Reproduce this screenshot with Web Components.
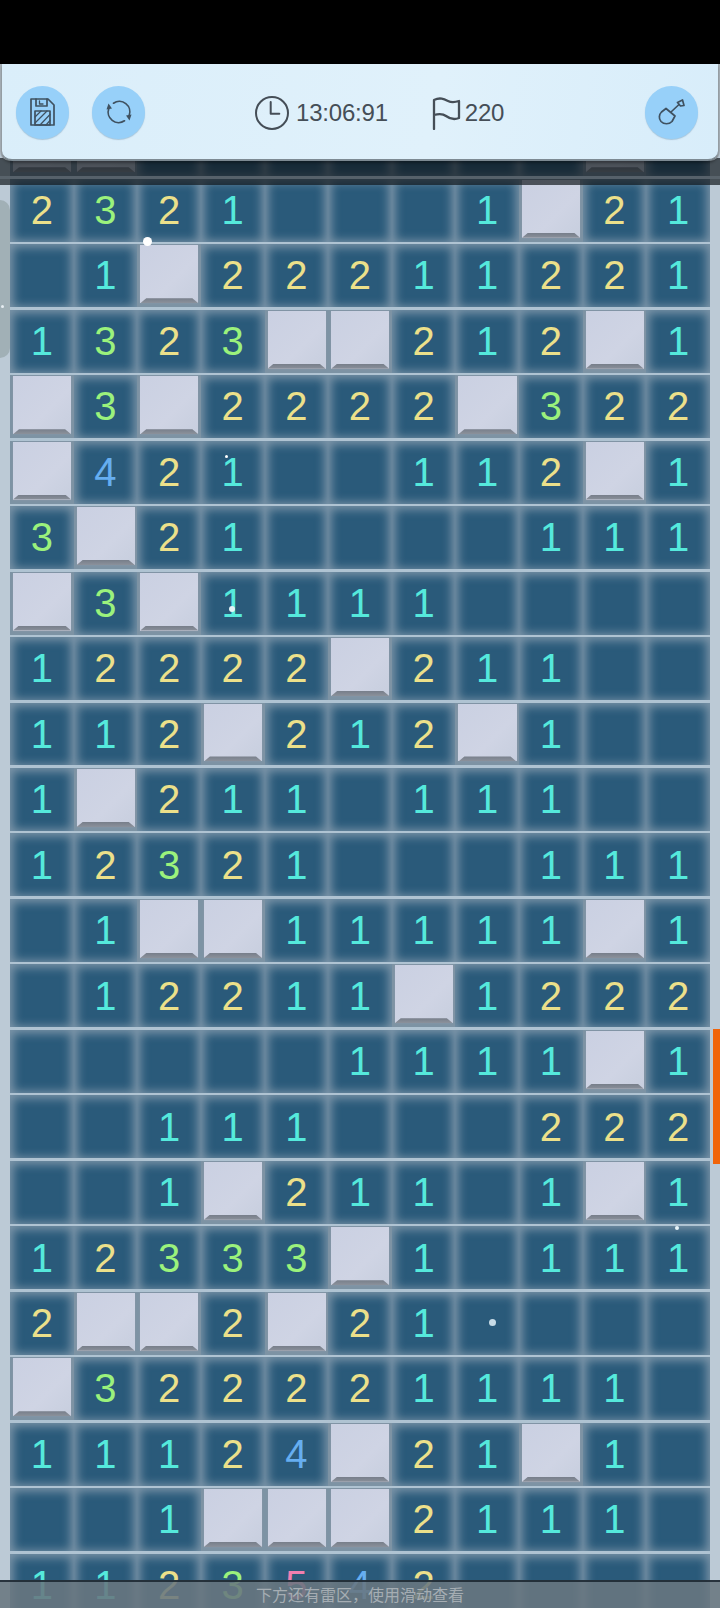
<!doctype html>
<html><head><meta charset="utf-8"><style>
html,body{margin:0;height:100%;background:#bccad6;font-family:"Liberation Sans","Noto Sans CJK SC",sans-serif}
body{width:720px;height:1608px;overflow:hidden;position:relative}
</style></head><body>
<mine-app></mine-app>
<template id="t-app"><style>
:host{display:flex;flex-direction:column;width:720px;height:1608px;overflow:hidden;position:relative;background:#bccad6}
.status{height:64px;flex:none;background:#000}
.scroll{flex:1;min-height:0;padding:49.3px 10px 0;overflow:hidden}
.top{position:absolute;left:0;right:0;top:158px;height:27px;background:rgba(15,20,25,.68)}
.top::after{content:"";position:absolute;left:0;right:0;top:18px;height:3px;background:rgba(140,150,160,.28)}
.side{position:absolute;left:0;top:200px;width:10px;height:158px;background:#a1b0b6;border-radius:0 10px 10px 0}
.side i{position:absolute;left:1px;top:105px;width:3px;height:3px;border-radius:50%;background:#e6edf2}
.bar{position:absolute;right:0;top:1029px;width:7px;height:135px;background:#f0640a}
mine-hud{position:absolute;left:0;top:64px;width:720px}
mine-notice{position:absolute;left:0;right:0;bottom:0}
.dot{position:absolute;border-radius:50%;background:#fff}
</style>
<div class="status"></div>
<div class="scroll"><mine-board></mine-board></div>
<div class="side"><i></i></div>
<div class="bar"></div>
<div class="top"></div>
<mine-hud></mine-hud>
<mine-notice>下方还有雷区，使用滑动查看</mine-notice>
<span class="dot" style="left:143px;top:237px;width:9px;height:9px"></span>
<span class="dot" style="left:225px;top:455px;width:3px;height:3px"></span>
<span class="dot" style="left:229px;top:606px;width:6px;height:6px;background:#e4f2f6"></span>
<span class="dot" style="left:489px;top:1319px;width:7px;height:7px;background:#c8dbe6"></span>
<span class="dot" style="left:675px;top:1226px;width:4px;height:4px;background:#e8f4f8"></span>
</template>
<template id="t-hud"><style>
:host{display:block}
.box{height:97px;box-sizing:border-box;margin:0 2px 0 2px;padding:1px 20px 0 14px;display:flex;align-items:center;background:linear-gradient(100deg,#daeefa,#e0f1fb 60%,#d8edfa);border-radius:0 0 10px 10px;border-bottom:2px solid #7d8a93;box-shadow:0 2px 3px rgba(0,0,0,.35),-2px 0 0 #a9b3ba,2px 0 0 #a9b3ba;color:#454e57;position:relative}
.btn{width:53px;height:53px;border-radius:50%;background:#97d0f9;display:flex;align-items:center;justify-content:center;flex:none;box-shadow:0 1px 1px rgba(120,160,190,.5)}
.b2{margin-left:23px}
.stats{position:absolute;left:253px;top:2px;height:94px;display:flex;align-items:center;font-size:24px;letter-spacing:-.2px}
.stat{display:flex;align-items:center}
.flag{margin-left:44px}
.last{margin-left:auto}
svg{display:block;fill:none;stroke:#3f5160;stroke-width:1.7;stroke-linejoin:round;stroke-linecap:round}
.big{stroke:#454e57;stroke-width:2}
.fill{fill:#3f5160;stroke:none}
</style>
<div class="box">
<div class="btn"><svg width="25" height="28" viewBox="0 0 25 28"><path d="M1 1H18L24 7V27H1Z"/><path d="M6 1V8H17V1"/><path d="M9.500 3V6H13" stroke-width="1.300"/><path d="M5 13H20V27H5Z"/><path d="M5 19L11 13M5 25L17 13M10 27L20 16.500M16 27L20 22.500" stroke-width="1.200"/></svg></div>
<div class="btn b2"><svg width="26" height="26" viewBox="0 0 26 26"><path d="M7.500 4.200A10.500 10.500 0 0 1 23.200 16.500"/><path d="M18.500 21.800A10.500 10.500 0 0 1 2.800 9.500"/><path class="fill" d="M20 16.500L25.500 15.500L23.500 21.500Z"/><path class="fill" d="M0.500 10.500L6 9.500L2.500 4.500Z"/></svg></div>
<div class="stats">
<div class="stat"><svg class="big" width="34" height="34" viewBox="0 0 34 34"><circle cx="17" cy="17" r="16"/><path d="M15.700 6V17.700H24.300"/></svg><span style="margin-left:7px">13:06:91</span></div>
<div class="stat flag"><svg class="big" width="29" height="33" viewBox="0 0 29 33"><path d="M2 32V3C8 0 12 2 16 4C20 6 24 5 27 4V21C22 23 18 22 14 19C10 16 6 17 2 18" stroke-width="2.300"/></svg><span style="margin-left:4px">220</span></div>
</div>
<div class="btn last"><svg width="27" height="26" viewBox="0 0 27 26"><path d="M13 13L21 5.500"/><path d="M19.500 3.500L24.500 1L26 6.500L22.500 7Z"/><path d="M8 9.500L17 17L14 22.500C11 25.500 6 25.500 3 22.500C0.500 19.500 1 15.500 3.500 13Z"/></svg></div>
</div></template>
<template id="t-cell"><style>
:host{display:flex;align-items:center;justify-content:center;box-sizing:border-box;height:65.48px;position:relative;font-size:40px;line-height:1;background:#7b94a8;overflow:hidden}
.in{position:absolute;inset:0;background:#2a5a7a;box-shadow:0 0 10px 3.500px #7b94a8 inset}
.line{position:absolute;left:0;right:0;bottom:0;height:2.500px;background:#afc3d2}
.v{position:relative;padding-bottom:3px}
:host([tile]) .in{inset:1px 2.500px 6.500px 3px;background:linear-gradient(135deg,#cad0e2,#cfd4e4 60%,#c7cede);box-shadow:0 0 2px #8b99a8}
:host([tile]) .in::after{content:"";position:absolute;left:0;right:0;bottom:0;height:5px;background:linear-gradient(#777e8a,#8b919b);clip-path:polygon(6px 0,calc(100% - 6px) 0,100% 100%,0 100%)}
:host([tile]){background:#7d93a4}
</style><div class="in"></div><div class="line"></div><span class="v"><slot></slot></span></template>
<template id="t-board"><style>
:host{display:grid;grid-template-columns:repeat(11,63.636px);width:700px}
</style><slot></slot></template>
<template id="t-notice"><style>
:host{display:block;height:28px;box-sizing:border-box;background:rgba(105,118,128,.88);border-top:2px solid rgba(15,25,35,.75);text-align:center;font-size:16px;line-height:28px;color:#a5adb3;font-family:"Liberation Sans","Noto Sans CJK SC",sans-serif}
</style><slot></slot></template>
<script>
const def=(n,id,extra)=>customElements.define(n,class extends HTMLElement{constructor(){super();this.attachShadow({mode:"open"}).appendChild(document.getElementById(id).content.cloneNode(true))}connectedCallback(){extra&&extra(this)}});
const C={1:"#55e9dc",2:"#ece08a",3:"#9bf27c",4:"#66aef0",5:"#f07fb0"};
const data=["XX.......X.","2321...1X21",".1X22211221","1323XX212X1","X3X2222X322","X421..112X1","3X21....111","X3X1111....","12222X211..","112X212X1..","1X211.111..","12321...111",".1XX11111X1",".12211X1222",".....1111X1","..111...222","..1X211.1X1","12333X1.111","2XX2X21....","X322221111.","11124X21X1.","..1XXX2111.","1123542...."];
def("mine-cell","t-cell");def("mine-notice","t-notice");def("mine-hud","t-hud");
def("mine-board","t-board",el=>{data.forEach(r=>{[...r].forEach(c=>{const d=document.createElement("mine-cell");if(c==="X")d.setAttribute("tile","");else if(c!==".")
{d.textContent=c;d.style.color=C[c]}el.appendChild(d)})})});
def("mine-app","t-app");
</script></body></html>
